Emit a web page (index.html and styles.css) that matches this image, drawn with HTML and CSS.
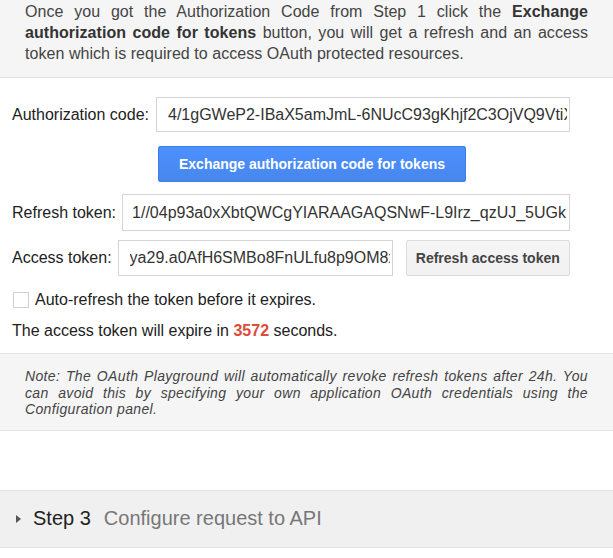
FILE: index.html
```html
<!DOCTYPE html>
<html>
<head>
<meta charset="utf-8">
<link rel="stylesheet" href="styles.css">
</head>
<body>
<div class="intro">
  Once you got the Authorization Code from Step 1 click the <b>Exchange authorization code for tokens</b> button, you will get a refresh and an access token which is required to access OAuth protected resources.
</div>
<div class="form">
  <div class="row">
    <label class="lbl">Authorization code:</label>
    <input class="field" type="text" readonly value="4/1gGWeP2-IBaX5amJmL-6NUcC93gKhjf2C3OjVQ9VtiXyZ8kLmQpR">
  </div>
  <div class="btn-row">
    <button class="btn-primary">Exchange authorization code for tokens</button>
  </div>
  <div class="row row-refresh">
    <label class="lbl">Refresh token:</label>
    <input class="field field-refresh" type="text" readonly value="1//04p93a0xXbtQWCgYIARAAGAQSNwF-L9Irz_qzUJ_5UGkP0dL">
  </div>
  <div class="row row-access">
    <label class="lbl">Access token:</label>
    <input class="field field-access" type="text" readonly value="ya29.a0AfH6SMBo8FnULfu8p9OM8xQ2">
    <button class="btn-secondary">Refresh access token</button>
  </div>
  <label class="check-row"><span class="checkbox"></span>Auto-refresh the token before it expires.</label>
  <div class="expire">The access token will expire in <b class="secs">3572</b> seconds.</div>
</div>
<div class="note">
  Note: The OAuth Playground will automatically revoke refresh tokens after 24h. You can avoid this by specifying your own application OAuth credentials using the Configuration panel.
</div>
<div class="spacer"></div>
<div class="step">
  <span class="tri"></span>
  <span class="step-num">Step 3</span>
  <span class="step-title">Configure request to API</span>
</div>
</body>
</html>
```
FILE: styles.css
```css
html, body {
  margin: 0;
  padding: 0;
  background: #fff;
}
body {
  font-family: "Liberation Sans", Arial, sans-serif;
  color: #333;
  font-size: 16px;
  width: 613px;
  overflow: hidden;
}
.intro {
  background: #f5f5f5;
  border-bottom: 1px solid #e3e3e3;
  padding: 2px 25px 13px;
  line-height: 20.8px;
  text-align: justify;
  color: #444;
  letter-spacing: 0.05px;
}
.intro b {
  color: #333;
}
.form {
  padding: 19px 43px 0 12px;
}
.row {
  display: flex;
  align-items: center;
}
.lbl {
  white-space: nowrap;
  color: #222;
}
.field {
  flex: 1;
  min-width: 0;
  margin-left: 7px;
  height: 35px;
  box-sizing: border-box;
  border: 1px solid #d4d4d4;
  padding: 0 2px 0 11px;
  font-family: "Liberation Sans", Arial, sans-serif;
  font-size: 16px;
  color: #333;
  background: #fff;
  outline: none;
}
.btn-row {
  display: flex;
  padding-left: 146px;
  margin-top: 14px;
}
.btn-primary {
  width: 308px;
  height: 36px;
  border: 1px solid #3b7fe8;
  border-radius: 2px;
  background: linear-gradient(#4d90fe, #4787ed);
  color: #fff;
  font-family: "Liberation Sans", Arial, sans-serif;
  font-weight: bold;
  font-size: 14px;
  padding: 0;
}
.row-refresh {
  margin-top: 12px;
}
.row-refresh .field {
  height: 37px;
  margin-left: 6px;
  padding-left: 9px;
}
.row-access {
  margin-top: 9px;
}
.field-access {
  flex: none;
  width: 275px;
  height: 36px;
  margin-left: 6px;
}
.btn-secondary {
  margin-left: 13px;
  flex: 1;
  height: 36px;
  border: 1px solid #dcdcdc;
  border-radius: 2px;
  background: linear-gradient(#f5f5f5, #f1f1f1);
  color: #444;
  font-family: "Liberation Sans", Arial, sans-serif;
  font-weight: bold;
  font-size: 14px;
  padding: 0;
}
.check-row {
  display: flex;
  align-items: center;
  margin-top: 14px;
  margin-left: 1px;
  color: #222;
  height: 20px;
}
.checkbox {
  width: 14px;
  height: 14px;
  border: 1px solid #d0d0d0;
  background: #fff;
  margin-right: 6px;
}
.expire {
  margin-top: 11px;
  color: #222;
  line-height: 20px;
}
.secs {
  color: #dd4b39;
}
.note {
  margin-top: 12px;
  background: #f5f5f5;
  border-top: 1px solid #e3e3e3;
  border-bottom: 1px solid #e3e3e3;
  padding: 14px 25px 12px;
  font-size: 14px;
  line-height: 16.5px;
  font-style: italic;
  text-align: justify;
  color: #444;
  letter-spacing: 0.35px;
}
.spacer {
  height: 59px;
}
.step {
  background: #f0f0f0;
  border-top: 1px solid #e3e3e3;
  border-bottom: 1px solid #e3e3e3;
  height: 56px;
  display: flex;
  align-items: center;
  padding-left: 16px;
  font-size: 20px;
}
.tri {
  width: 0;
  height: 0;
  border-top: 4px solid transparent;
  border-bottom: 4px solid transparent;
  border-left: 5px solid #555;
  margin-right: 12px;
}
.step-num {
  color: #222;
}
.step-title {
  color: #777;
  margin-left: 13px;
}
```
